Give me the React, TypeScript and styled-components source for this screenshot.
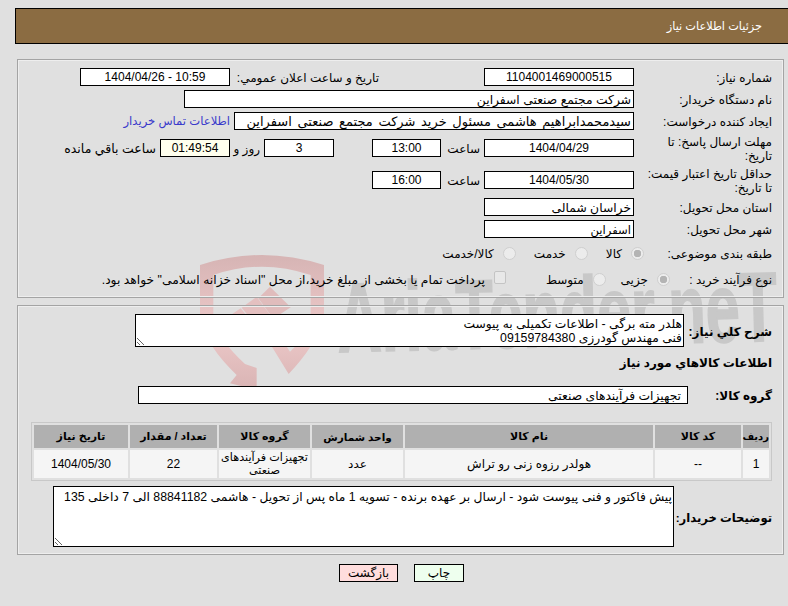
import React from "react";
import styled, { createGlobalStyle } from "styled-components";

const GlobalStyle = createGlobalStyle`
  * { box-sizing: border-box; }
  html, body { margin: 0; padding: 0; background: #e0e0e0; overflow: hidden; }
  body { font-family: "Liberation Sans", "DejaVu Sans", sans-serif; font-size: 12px; color: #000; }
`;

const Page = styled.div`
  position: relative;
  width: 788px;
  height: 606px;
  overflow: hidden;
  padding-top: 8px;
`;

const Watermark = styled.svg`
  position: absolute;
  left: 190px;
  top: 240px;
  z-index: 0;
`;

const BrandText = styled.text`
  font-family: "Liberation Sans", sans-serif;
  font-weight: 700;
  font-size: 98px;
  fill: #c8c8c8;
  stroke: #c8c8c8;
  stroke-width: 2px;
`;

const Content = styled.div`
  position: relative;
  z-index: 1;
  direction: rtl;
`;

const Header = styled.div`
  margin-right: -2px;
  width: 775px;
  height: 36px;
  background: #8b6c42;
  border: 1px solid #000;
  color: #fff;
  font-size: 11.3px;
  display: flex;
  align-items: center;
  padding-right: 27px;
`;

const Panel = styled.div<{ $top: number }>`
  margin-right: 4px;
  width: 767px;
  margin-top: ${(p) => p.$top}px;
  border: 1px solid #a4a4a4;
  box-shadow: inset 0 0 0 1px #eeeeee;
  padding: 8px 11px 7px 0;
`;

const Row = styled.div<{ $h?: number; $top?: number }>`
  display: flex;
  align-items: center;
  height: ${(p) => p.$h ?? 18}px;
  margin-top: ${(p) => p.$top ?? 4}px;
`;

const Label = styled.div<{ $w?: number; $bold?: boolean; $gap?: number; $size?: number }>`
  flex: none;
  width: ${(p) => (p.$w ? `${p.$w}px` : "auto")};
  margin-right: ${(p) => p.$gap ?? 0}px;
  padding-top: 2px;
  font-weight: ${(p) => (p.$bold ? 700 : 400)};
  font-size: ${(p) => p.$size ?? 12}px;
  line-height: 14px;
  white-space: pre;
`;

const Field = styled.div<{ $w: number; $size?: number; $start?: boolean; $bg?: string; $gap?: number; $inset?: number; $spread?: number }>`
  flex: none;
  width: ${(p) => p.$w}px;
  height: 18px;
  margin-right: ${(p) => p.$gap ?? 0}px;
  background: ${(p) => p.$bg ?? "#fff"};
  border: 1px solid #000;
  font-size: ${(p) => p.$size ?? (p.$start ? 12.3 : 12)}px;
  word-spacing: ${(p) => p.$spread ?? 0}px;
  line-height: ${(p) => (p.$start ? 18 : 16)}px;
  padding: 0 ${(p) => p.$inset ?? 2}px;
  text-align: ${(p) => (p.$start ? "right" : "center")};
  white-space: nowrap;
  overflow: hidden;
`;

const Link = styled.a`
  color: #3a3acb;
  font-size: 11.6px;
  margin-right: 4px;
  text-decoration: none;
`;

const Choice = styled.label<{ $gap?: number; $size?: number }>`
  display: flex;
  align-items: center;
  padding-top: 2px;
  font-size: ${(p) => p.$size ?? 12}px;
  margin-right: ${(p) => p.$gap ?? 0}px;
`;

const Radio = styled.input.attrs({ type: "radio", disabled: true })`
  appearance: none;
  width: 13px;
  height: 13px;
  margin: 0 0 2px 9px;
  border-radius: 50%;
  border: 1px solid #cfcfcf;
  background: #ececec;
  &:checked {
    background: radial-gradient(circle, #b4b4b4 0 3.5px, #ececec 4px);
  }
`;

const Check = styled.input.attrs({ type: "checkbox", disabled: true })`
  appearance: none;
  width: 12px;
  height: 13px;
  margin: 0 0 5px 9px;
  border-radius: 2px;
  border: 1px solid #c4c4c4;
  background: #e8e8e8;
`;

const Note = styled.textarea<{ $w: number; $h: number; $pad: number }>`
  flex: none;
  display: block;
  width: ${(p) => p.$w}px;
  height: ${(p) => p.$h}px;
  margin: 0;
  padding: ${(p) => p.$pad}px 1px 0;
  border: 1px solid #000;
  border-radius: 0;
  outline: none;
  background: #fff;
  color: #000;
  font: 12.3px/14px "Liberation Sans", "DejaVu Sans", sans-serif;
  direction: rtl;
  overflow: hidden;
  resize: both;
`;

const ItemsTable = styled.table`
  table-layout: fixed;
  width: 741px;
  margin-top: 18px;
  border: 1px solid #c8c8c8;
  border-spacing: 2px;
  border-collapse: separate;
  font-size: 12px;
`;

const HeadCell = styled.th<{ $w: number; $size?: number }>`
  width: ${(p) => p.$w}px;
  height: 23px;
  padding: 0;
  background: #b0b0b0;
  font-size: ${(p) => p.$size ?? 11}px;
  font-weight: 700;
  text-align: center;
`;

const Cell = styled.td<{ $size?: number }>`
  height: 28px;
  padding: 0;
  background: #f5f5f5;
  font-size: ${(p) => p.$size ?? 12}px;
  line-height: 13px;
  text-align: center;
  white-space: pre;
`;

const Actions = styled.div`
  display: flex;
  gap: 16px;
  margin: 9px 324px 0 0;
`;

const ActionButton = styled.button<{ $bg: string; $w: number }>`
  width: ${(p) => p.$w}px;
  height: 18px;
  padding: 0;
  border: 1px solid #000;
  border-radius: 0;
  background: ${(p) => p.$bg};
  color: #000;
  font: 12px "Liberation Sans", "DejaVu Sans", sans-serif;
`;

const columns = [
  ["ردیف", 26, 10],
  ["کد کالا", 86, 11],
  ["نام کالا", 248, 11],
  ["واحد شمارش", 91, 10.5],
  ["گروه کالا", 91, 11],
  ["تعداد / مقدار", 87, 11],
  ["تاریخ نیاز", 94, 11],
] as const;

// shield, gavel and wordmark sit behind the form, coordinates are page x/y minus 190/240
const Logo = () => (
  <Watermark width="598" height="150" viewBox="0 0 598 150">
    <defs>
      <linearGradient id="shieldFill" x1="0" y1="0" x2="0" y2="1">
        <stop offset="0" stopColor="#d6b4b4" />
        <stop offset="0.55" stopColor="#edc9c9" />
        <stop offset="1" stopColor="#d9b4b4" />
      </linearGradient>
    </defs>
    <g transform="scale(0.3333)">
      <path
        fill="url(#shieldFill)"
        d="M30 75 Q215 15 402 75 L402 235 Q375 320 296 402 L232 298 L258 270 L300 335 Q360 280 362 232 L362 105 Q215 55 70 105 L70 232 Q85 300 165 372 L200 384 L200 450 L120 430 L140 405 Q50 320 30 235 Z"
      />
      <path fill="#e6c2c2" d="M108 235 L152 205 L205 268 L160 300 Z" />
      <path fill="#e0bcbc" d="M205 175 L240 140 L302 202 L250 236 Z" />
      <path fill="#e4c0c0" d="M155 203 L200 170 L252 240 L208 268 Z" />
    </g>
    <BrandText
      x="148"
      y="112"
      textLength="440"
      lengthAdjust="spacingAndGlyphs"
      transform="rotate(-1.5 148 112)"
    >
      AriaTender.neT
    </BrandText>
  </Watermark>
);

export default function App() {
  return (
    <Page>
      <GlobalStyle />
      <Logo />
      <Content>
        <Header>جزئیات اطلاعات نیاز</Header>

        <Panel $top={15}>
          <Row $top={0}>
            <Label $w={138}>شماره نیاز:</Label>
            <Field $w={150}>1104001469000515</Field>
            <Label $w={149} $gap={105}>تاریخ و ساعت اعلان عمومي:</Label>
            <Field $w={150}>10:59 - 1404/04/26</Field>
          </Row>
          <Row>
            <Label $w={138}>نام دستگاه خریدار:</Label>
            <Field $w={450} $start>شرکت مجتمع صنعتی اسفراین</Field>
          </Row>
          <Row>
            <Label $w={138}>ایجاد کننده درخواست:</Label>
            <Field $w={400} $start $size={13} $spread={2}>سیدمحمدابراهیم هاشمی مسئول خرید شرکت مجتمع صنعتی اسفراین</Field>
            <Link href="#">اطلاعات تماس خریدار</Link>
          </Row>
          <Row $h={28}>
            <Label $w={138}>{"مهلت ارسال پاسخ: تا\nتاریخ:"}</Label>
            <Field $w={150}>1404/04/29</Field>
            <Label $w={39} $gap={4}>ساعت</Label>
            <Field $w={69}>13:00</Field>
            <Field $w={70} $gap={38}>3</Field>
            <Label $w={30} $gap={4}>روز و</Label>
            <Field $w={70} $bg="#ffffee">01:49:54</Field>
            <Label $gap={4} $size={12.5}>ساعت باقي مانده</Label>
          </Row>
          <Row $h={28}>
            <Label $w={138}>{"حداقل تاریخ اعتبار قیمت:\nتا تاریخ:"}</Label>
            <Field $w={150}>1404/05/30</Field>
            <Label $w={39} $gap={4}>ساعت</Label>
            <Field $w={69}>16:00</Field>
          </Row>
          <Row>
            <Label $w={138}>استان محل تحویل:</Label>
            <Field $w={150} $start>خراسان شمالی</Field>
          </Row>
          <Row>
            <Label $w={138}>شهر محل تحویل:</Label>
            <Field $w={150} $start $size={11.6}>اسفراین</Field>
          </Row>
          <Row $h={22}>
            <Label $w={128}>طبقه بندی موضوعی:</Label>
            <Choice>
              <Radio name="category" defaultChecked />
              کالا
            </Choice>
            <Choice $gap={18}>
              <Radio name="category" />
              خدمت
            </Choice>
            <Choice $gap={18}>
              <Radio name="category" />
              کالا/خدمت
            </Choice>
          </Row>
          <Row $h={22}>
            <Label $w={102}>نوع فرآیند خرید :</Label>
            <Choice>
              <Radio name="process" defaultChecked />
              جزیی
            </Choice>
            <Choice $gap={15}>
              <Radio name="process" />
              متوسط
            </Choice>
            <Choice $gap={40} $size={12.3}>
              <Check />
              پرداخت تمام یا بخشی از مبلغ خرید،از محل "اسناد خزانه اسلامی" خواهد بود.
            </Choice>
          </Row>
        </Panel>

        <Panel $top={7}>
          <Row $h={33} $top={0}>
            <Label $w={88} $bold>شرح كلي نياز:</Label>
            <Note
              $w={549}
              $h={33}
              $pad={2}
              readOnly
              defaultValue={"هلدر مته برگی - اطلاعات تکمیلی به پیوست\nفنی مهندس گودرزی 09159784380"}
            />
          </Row>
          <Row $top={6}>
            <Label $bold>اطلاعات كالاهاي مورد نياز</Label>
          </Row>
          <Row $top={15}>
            <Label $w={84} $bold>گروه کالا:</Label>
            <Field $w={550} $start $inset={6}>تجهیزات فرآیندهای صنعتی</Field>
          </Row>
          <ItemsTable>
            <thead>
              <tr>
                {columns.map(([title, width, size]) => (
                  <HeadCell key={title} $w={width} $size={size}>{title}</HeadCell>
                ))}
              </tr>
            </thead>
            <tbody>
              <tr>
                <Cell>1</Cell>
                <Cell>--</Cell>
                <Cell>هولدر رزوه زنی رو تراش</Cell>
                <Cell>عدد</Cell>
                <Cell $size={11.2}>{"تجهیزات فرآیندهای\nصنعتی"}</Cell>
                <Cell>22</Cell>
                <Cell>1404/05/30</Cell>
              </tr>
            </tbody>
          </ItemsTable>
          <Row $h={61} $top={5}>
            <Label $w={98} $bold $size={11.6}>توضیحات خریدار:</Label>
            <Note
              $w={621}
              $h={61}
              $pad={3}
              readOnly
              defaultValue="پیش فاکتور و فنی پیوست شود - ارسال بر عهده برنده - تسویه 1 ماه پس از تحویل - هاشمی 88841182 الی 7 داخلی 135"
            />
          </Row>
        </Panel>

        <Actions>
          <ActionButton $bg="#eeffee" $w={50}>چاپ</ActionButton>
          <ActionButton $bg="#ffdddd" $w={59}>بازگشت</ActionButton>
        </Actions>
      </Content>
    </Page>
  );
}
